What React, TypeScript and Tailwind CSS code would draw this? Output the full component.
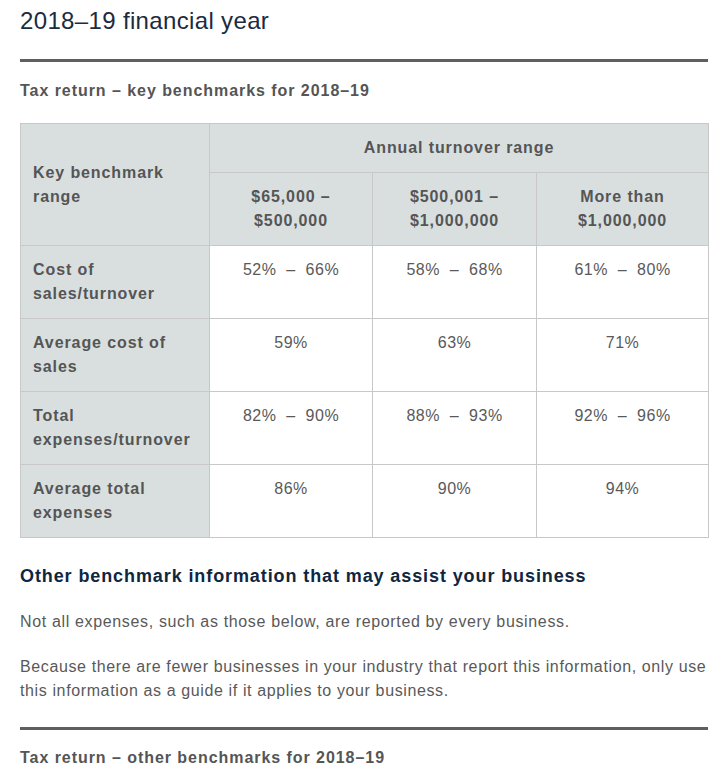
export default function App() {
  const rows = [
    { label: ["Cost of", "sales/turnover"], values: ["52%\u00a0 \u2013\u00a0 66%", "58%\u00a0 \u2013\u00a0 68%", "61%\u00a0 \u2013\u00a0 80%"] },
    { label: ["Average cost of", "sales"], values: ["59%", "63%", "71%"] },
    { label: ["Total", "expenses/turnover"], values: ["82%\u00a0 \u2013\u00a0 90%", "88%\u00a0 \u2013\u00a0 93%", "92%\u00a0 \u2013\u00a0 96%"] },
    { label: ["Average total", "expenses"], values: ["86%", "90%", "94%"] },
  ]

  return (
    <main className="min-h-screen bg-white font-['Liberation_Sans',Arial,sans-serif] text-[#555555]">
      <div className="w-[688px] ml-[20px]">
        {/* Title */}
        <h1 className="pt-[6px] text-[24px] leading-[30px] tracking-[0.35px] text-[#1b2b40]">2018–19 financial year</h1>
        <div className="mt-[23px] h-[3px] bg-[#5f5f5f]"></div>

        <h2 className="mt-[17px] text-[16px] leading-[24px] font-bold tracking-[0.95px] text-[#555555]">
          Tax return – key benchmarks for 2018–19
        </h2>

        {/* Benchmarks table */}
        <table className="mt-[20px] w-[688px] table-fixed border-collapse text-[16px] leading-[24px]">
          <colgroup>
            <col className="w-[189px]" />
            <col className="w-[163px]" />
            <col className="w-[164px]" />
            <col className="w-[172px]" />
          </colgroup>
          <thead className="tracking-[0.9px]">
            <tr>
              <th
                rowSpan={2}
                className="border border-[#c8c8c8] bg-[#d9dfdf] px-[12px] py-[12px] text-left align-middle font-bold"
              >
                Key benchmark
                <br />
                range
              </th>
              <th colSpan={3} className="border border-[#c8c8c8] bg-[#d9dfdf] py-[12px] text-center font-bold">
                Annual turnover range
              </th>
            </tr>
            <tr>
              <th className="border border-[#c8c8c8] bg-[#d9dfdf] py-[12px] text-center font-bold">
                $65,000 –
                <br />
                $500,000
              </th>
              <th className="border border-[#c8c8c8] bg-[#d9dfdf] py-[12px] text-center font-bold">
                $500,001 –
                <br />
                $1,000,000
              </th>
              <th className="border border-[#c8c8c8] bg-[#d9dfdf] py-[12px] text-center font-bold">
                More than
                <br />
                $1,000,000
              </th>
            </tr>
          </thead>
          <tbody>
            {rows.map((row) => (
              <tr key={row.label.join(" ")}>
                <th className="border border-[#c8c8c8] bg-[#d9dfdf] px-[12px] py-[12px] text-left align-top font-bold tracking-[0.9px]">
                  {row.label[0]}
                  <br />
                  {row.label[1]}
                </th>
                {row.values.map((v, i) => (
                  <td key={i} className="h-[73px] border border-[#c8c8c8] py-[12px] text-center align-top tracking-[0.5px] text-[#595959]">
                    {v}
                  </td>
                ))}
              </tr>
            ))}
          </tbody>
        </table>

        {/* Other benchmark info */}
        <h2 className="mt-[25px] text-[18px] leading-[27px] font-bold tracking-[0.9px] text-[#0f2640]">
          Other benchmark information that may assist your business
        </h2>
        <p className="mt-[20px] text-[16px] leading-[24px] tracking-[0.65px] text-[#595959]">
          Not all expenses, such as those below, are reported by every business.
        </p>
        <p className="mt-[21px] whitespace-nowrap text-[16px] leading-[24px] tracking-[0.62px] text-[#595959]">
          Because there are fewer businesses in your industry that report this information, only use
          <br />
          this information as a guide if it applies to your business.
        </p>
        <div className="mt-[24px] h-[3px] bg-[#5f5f5f]"></div>
        <h2 className="mt-[16px] text-[16px] leading-[24px] font-bold tracking-[0.95px] text-[#555555]">
          Tax return – other benchmarks for 2018–19
        </h2>
      </div>
    </main>
  )
}
